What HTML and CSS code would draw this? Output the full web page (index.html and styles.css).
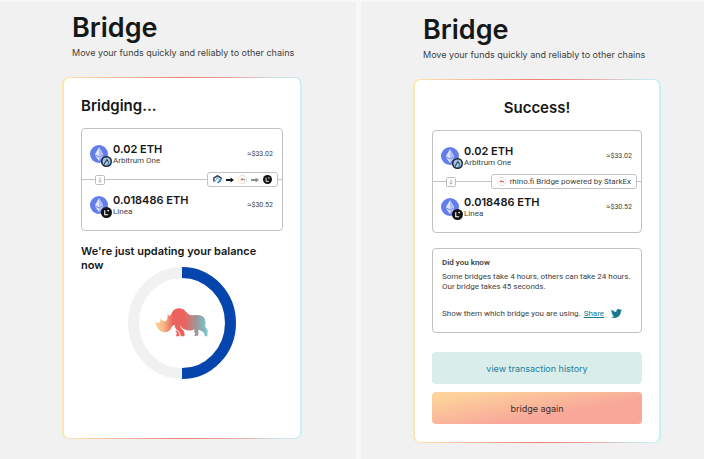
FILE: index.html
```html
<!DOCTYPE html>
<html lang="en">

	<head>
		<meta charset="utf-8">
		<title>Bridge</title>
		<link rel="stylesheet" href="styles.css">
	</head>

	<body>

		<!-- shared icons -->
		<svg class="icon-defs" aria-hidden="true">
			<symbol id="eth" viewBox="0 0 18 18">
				<circle cx="9" cy="9" r="9" fill="#627eea"/>
				<path d="M9 2.2L4.8 9.2L9 11.6L13.2 9.2Z" fill="#dfe5fb"/>
				<path d="M9 2.2V11.6L13.2 9.2Z" fill="#b1bff4"/>
				<path d="M4.8 10.2L9 12.6L13.2 10.2L9 16Z" fill="#dfe5fb"/>
				<path d="M9 12.6L13.2 10.2L9 16Z" fill="#b1bff4"/>
			</symbol>
			<symbol id="arbitrum" viewBox="0 0 12 12">
				<circle cx="6" cy="6" r="6" fill="#17212d"/>
				<circle cx="6" cy="6" r="4.4" fill="#a9c7e4"/>
				<path d="M3.2 9.2L6.4 3.8L8.4 7" fill="none" stroke="#2b3c50" stroke-width="1.2"/>
				<path d="M6.4 9.6L8 6.6L9.6 8.4L8 10Z" fill="#3d94dc"/>
			</symbol>
			<symbol id="arbitrum-plain" viewBox="0 0 10 10">
				<path d="M1 7.5V3.2L5 .9L9 3.2V5" fill="none" stroke="#23384f" stroke-width="1.5"/>
				<path d="M2 7.5L5 2.8L6.4 5" fill="none" stroke="#8db1d3" stroke-width="1.3"/>
				<path d="M4.4 8.8L8.3 3.6L9.2 6.6L6 9.2Z" fill="#367fc4"/>
			</symbol>
			<symbol id="linea" viewBox="0 0 12 12">
				<circle cx="6" cy="6" r="6" fill="#121212"/>
				<path d="M4.1 3.6V8.5H7.8" fill="none" stroke="#fff" stroke-width="1.2"/>
				<circle cx="7.8" cy="4" r=".9" fill="#fff"/>
			</symbol>
			<symbol id="rhino-round" viewBox="0 0 10 10">
				<circle cx="5" cy="5" r="4.6" fill="#fff" stroke="url(#ring)" stroke-width=".5"/>
				<path d="M2 5.4Q3 5.6 3.4 4.5Q4.5 3 5.6 4.3Q7.8 4.2 8 6H7.2L6.5 5.4L5.2 5.5L4.8 6H4.2L4.1 5.3Q3 6.4 2 5.4Z" fill="#ee5f58"/>
				<path d="M6.3 4.3Q7.8 4.2 8 6H7.2L6.3 5.4Z" fill="#6fa9ae"/>
			</symbol>
			<symbol id="down" viewBox="0 0 10 10">
				<rect x=".5" y=".5" width="9" height="9" rx="1" fill="#fff" stroke="#bcbcbc"/>
				<path d="M5 2.5V7M3.4 5.6L5 7.2L6.6 5.6" fill="none" stroke="#a0a0a0" stroke-width=".8"/>
			</symbol>
			<symbol id="arrow" viewBox="0 0 8 6">
				<path d="M0 2.1H4.6V.6L8 3L4.6 5.4V3.9H0Z" fill="currentColor"/>
			</symbol>
			<linearGradient id="ring">
				<stop offset="0" stop-color="#fbd38d"/>
				<stop offset=".5" stop-color="#f08a80"/>
				<stop offset="1" stop-color="#8edbe2"/>
			</linearGradient>
		</svg>

		<div class="screens">

			<main class="screen screen-progress">
				<header class="page-header">
					<h1>Bridge</h1>
					<p>Move your funds quickly and reliably to other chains</p>
				</header>

				<section class="card">
					<h2>Bridging...</h2>

					<div class="transfer">
						<div class="token">
							<div class="token-icon">
								<svg class="coin"><use href="#eth"/></svg>
								<svg class="chain"><use href="#arbitrum"/></svg>
							</div>
							<div class="token-text">
								<strong>0.02 ETH</strong>
								<span>Arbitrum One</span>
							</div>
							<span class="fiat">≈$33.02</span>
						</div>
						<div class="route">
							<svg class="down"><use href="#down"/></svg>
							<div class="pill">
								<svg class="small-icon"><use href="#arbitrum-plain"/></svg>
								<svg class="arrow"><use href="#arrow"/></svg>
								<svg class="small-icon"><use href="#rhino-round"/></svg>
								<svg class="arrow arrow-waiting"><use href="#arrow"/></svg>
								<svg class="small-icon"><use href="#linea"/></svg>
							</div>
						</div>
						<div class="token">
							<div class="token-icon">
								<svg class="coin"><use href="#eth"/></svg>
								<svg class="chain"><use href="#linea"/></svg>
							</div>
							<div class="token-text">
								<strong>0.018486 ETH</strong>
								<span>Linea</span>
							</div>
							<span class="fiat">≈$30.52</span>
						</div>
					</div>

					<p class="status">We're just updating your balance now</p>

					<svg class="spinner" viewBox="0 0 108 112" role="img" aria-label="Half done">
						<defs>
							<linearGradient id="rhino-fill">
								<stop offset="0" stop-color="#fcd08c"/>
								<stop offset=".14" stop-color="#f8bd88"/>
								<stop offset=".34" stop-color="#ec625f"/>
								<stop offset=".55" stop-color="#ec625f"/>
								<stop offset=".8" stop-color="#989c9d"/>
								<stop offset="1" stop-color="#78cbd5"/>
							</linearGradient>
						</defs>
						<ellipse cx="54" cy="56" rx="48.5" ry="50.5" fill="none" stroke="#f1f1f1" stroke-width="11"/>
						<path d="M54 5.5A48.5 50.5 0 0 1 54 106.5" fill="none" stroke="#0545ad" stroke-width="11"/>
						<svg x="27" y="41" width="53" height="29" viewBox="286 218 159 87">
							<path fill="url(#rhino-fill)" d="M287 258C292 265 299 264 301 259C303 255 302 252 303 249C307 258 314 260 320 256C325 251 323 244 324 236L329 242L335 237C338 225 348 219 359 219C373 219 379 231 386 236C393 242 405 238 415 239C427 240 436 246 436 254L438 262C434 270 438 278 444 284L443 303H435C436 294 431 289 424 286L417 283C414 287 417 291 417 294L413 302H404L407 296L403 288L405 281C396 287 384 287 374 282C367 279 364 274 362 269C361 273 364 278 367 281C374 287 376 293 374 303H363C363 293 359 288 351 283C346 279 345 273 345 269C339 268 336 275 334 280C329 288 321 292 312 290C299 290 289 276 287 258ZM347 285C356 287 361 294 359 303H348L352 295Z"/>
						</svg>
					</svg>
				</section>
			</main>

			<main class="screen screen-success">
				<header class="page-header">
					<h1>Bridge</h1>
					<p>Move your funds quickly and reliably to other chains</p>
				</header>

				<section class="card">
					<h2>Success!</h2>

					<div class="transfer">
						<div class="token">
							<div class="token-icon">
								<svg class="coin"><use href="#eth"/></svg>
								<svg class="chain"><use href="#arbitrum"/></svg>
							</div>
							<div class="token-text">
								<strong>0.02 ETH</strong>
								<span>Arbitrum One</span>
							</div>
							<span class="fiat">≈$33.02</span>
						</div>
						<div class="route">
							<svg class="down"><use href="#down"/></svg>
							<div class="pill">
								<svg class="small-icon"><use href="#rhino-round"/></svg>
								<span>rhino.fi Bridge powered by StarkEx</span>
							</div>
						</div>
						<div class="token">
							<div class="token-icon">
								<svg class="coin"><use href="#eth"/></svg>
								<svg class="chain"><use href="#linea"/></svg>
							</div>
							<div class="token-text">
								<strong>0.018486 ETH</strong>
								<span>Linea</span>
							</div>
							<span class="fiat">≈$30.52</span>
						</div>
					</div>

					<div class="fact">
						<h3>Did you know</h3>
						<p>Some bridges take 4 hours, others can take 24 hours.<br>Our bridge takes 45 seconds.</p>
						<p class="share">
							Show them which bridge you are using.
							<a href="#">Share</a>
							<svg class="twitter" viewBox="0 0 24 24" aria-hidden="true"><path fill="#16798f" d="M23.95 4.57a10 10 0 0 1-2.82.77 4.96 4.96 0 0 0 2.16-2.72c-.95.55-2 .96-3.13 1.18a4.92 4.92 0 0 0-8.38 4.48C7.69 8.1 4.07 6.13 1.64 3.16a4.92 4.92 0 0 0 1.52 6.57 4.9 4.9 0 0 1-2.23-.61v.06a4.92 4.92 0 0 0 3.95 4.83 5 5 0 0 1-2.21.08 4.94 4.94 0 0 0 4.6 3.42A9.87 9.87 0 0 1 0 19.54a14 14 0 0 0 7.55 2.21c9.05 0 14-7.5 14-13.98 0-.21 0-.42-.02-.63a9.9 9.9 0 0 0 2.46-2.55z"/></svg>
						</p>
					</div>

					<div class="actions">
						<button type="button" class="btn btn-history">view transaction history</button>
						<button type="button" class="btn btn-again">bridge again</button>
					</div>
				</section>
			</main>

		</div>

	</body>

</html>
```
FILE: styles.css
```css
* {
	box-sizing: border-box;
	margin: 0;
	padding: 0;
}

body {
	background: #f8f8f8;
	color: #151818;
	font-family: Roboto, sans-serif;
	font-size: 8px;
	line-height: 10px;
}

h1,
h2,
strong,
.page-header p,
.status,
.btn {
	font-family: Inter, sans-serif;
}

svg {
	display: block;
	flex: none;
}

.icon-defs {
	position: absolute;
	width: 0;
	height: 0;
}

.screens {
	display: grid;
	grid-template-columns: minmax(0, 356fr) minmax(0, 343fr);
	gap: 5px;
	min-height: 100vh;
	padding-top: 2px;
}

.screen {
	background: #f1f1f1;
}

.screen-progress {
	padding: 8px 54px 20px 62px;
}

.screen-success {
	padding: 10px 43px 15px 52px;
}

.page-header {
	padding-left: 10px;
	margin-bottom: 18px;
}

.page-header h1 {
	font-size: 27px;
	font-weight: 600;
	line-height: 36px;
}

.page-header p {
	color: #3c3f3f;
	font-size: 9px;
	line-height: 13px;
	white-space: nowrap;
}

.card {
	display: flex;
	flex-direction: column;
	border: solid transparent;
	border-width: 1px 2px;
	border-radius: 7px;
	padding: 18px 17px;
	background: linear-gradient(#fff, #fff) padding-box,
		linear-gradient(90deg, #fde6b0, #f9b59a 25%, #ef7d72 50%, #e8a5a3 72%, #c9dfe2 88%, #c6f2f3) border-box;
}

.screen-progress .card {
	min-height: 362px;
}

.card h2 {
	font-size: 15px;
	font-weight: 600;
	line-height: 20px;
	margin-bottom: 12px;
}

.screen-success h2 {
	text-align: center;
}

.transfer,
.fact {
	border: 1px solid #c2c2c2;
	border-radius: 4px;
}

.token {
	display: flex;
	align-items: center;
	gap: 5px;
	height: 43px;
	padding: 7px 9px 0 8px;
}

.route + .token {
	padding: 0 9px 7px 8px;
}

.token-icon {
	position: relative;
}

.coin {
	width: 18px;
	height: 18px;
}

.chain {
	position: absolute;
	right: -4px;
	bottom: -4px;
	width: 11px;
	height: 11px;
}

.token-text {
	flex: 1;
	display: flex;
	flex-direction: column;
}

.token-text strong {
	font-size: 11px;
	font-weight: 600;
	line-height: 13px;
}

.token-text span,
.fiat {
	color: #3c3f3f;
}

.fiat {
	font-size: 7px;
}

/* the line runs behind the arrow and the pill */
.route {
	display: flex;
	align-items: center;
	justify-content: space-between;
	padding: 0 4px 0 13px;
	background: linear-gradient(#c2c2c2, #c2c2c2) center / 100% 1px no-repeat;
}

.down {
	width: 10px;
	height: 10px;
}

.pill {
	display: flex;
	align-items: center;
	gap: 4px;
	height: 15px;
	padding: 0 5px;
	border: 1px solid #c2c2c2;
	border-radius: 3px;
	background: #fff;
	color: #3c3f3f;
	white-space: nowrap;
}

.small-icon {
	width: 9px;
	height: 9px;
}

.arrow {
	width: 8px;
	height: 6px;
	color: #151818;
}

.arrow-waiting {
	color: #8c8c8c;
}

.status {
	margin-top: 13px;
	padding-right: 20px;
	font-size: 11px;
	font-weight: 600;
	line-height: 14px;
}

.spinner {
	align-self: center;
	width: 108px;
	height: 112px;
	margin-top: -5px;
}

.fact {
	margin-top: 15px;
	padding: 9px 9px 13px;
	color: #3c3f3f;
}

.fact h3 {
	font-size: 8px;
	font-weight: 600;
	margin-bottom: 4px;
}

.share {
	display: flex;
	align-items: center;
	gap: 3px;
	margin-top: 16px;
	white-space: nowrap;
}

.share a {
	color: #16798f;
}

.twitter {
	width: 11px;
	height: 11px;
	margin-left: 4px;
}

.actions {
	display: grid;
	gap: 8px;
	margin-top: 19px;
}

.btn {
	height: 32px;
	border: 0;
	border-radius: 4px;
	font-size: 9px;
}

.btn-history {
	background: #d9edeb;
	color: #227f99;
}

.btn-again {
	background: linear-gradient(170deg, #fdd29b 10%, #f8a799 65%);
	color: #3c2f2f;
}
```
